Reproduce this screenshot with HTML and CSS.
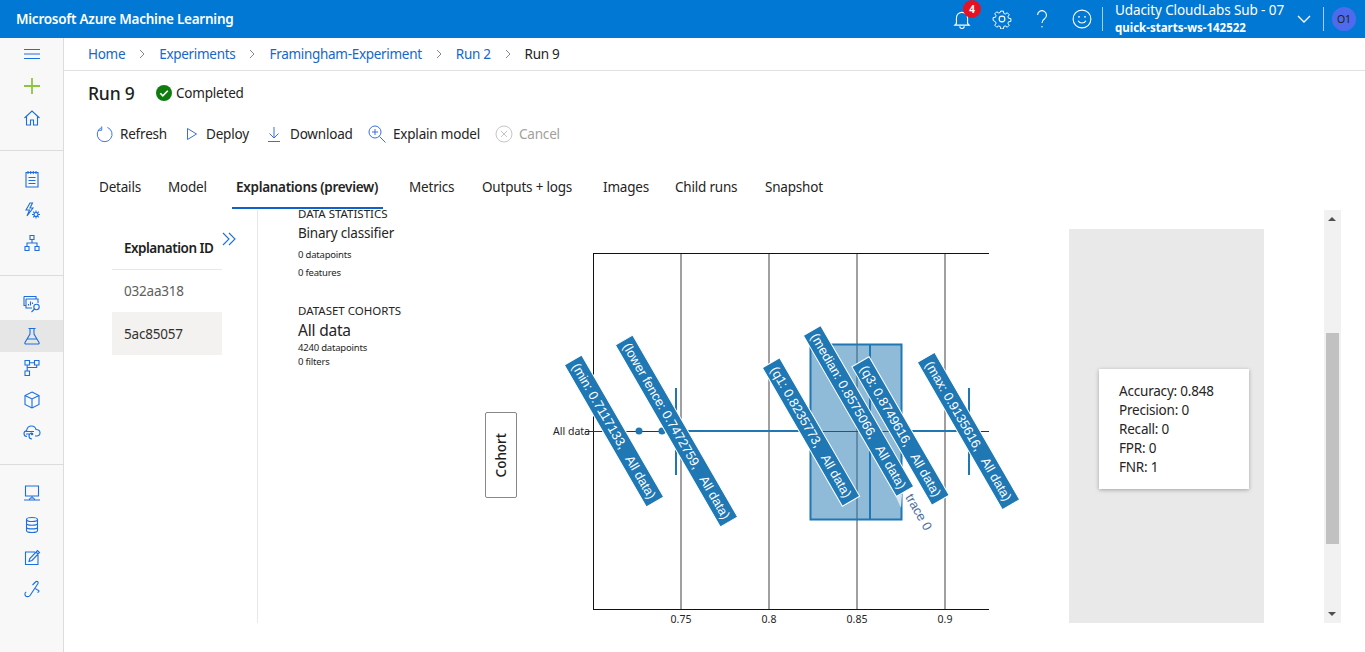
FILE: index.html
```html
<!DOCTYPE html>
<html lang="en">
<head>
  <meta charset="UTF-8">
  <meta name="viewport" content="width=device-width, initial-scale=1.0">
  <title>Run 9 - Microsoft Azure Machine Learning</title>
  <link rel="stylesheet" href="styles.css">
</head>
<body>
  <header class="topbar">
    <div class="brand">Microsoft Azure Machine Learning</div>
    <div class="top-actions">
      <div class="top-icon">
        <svg width="20" height="20" viewBox="0 0 18 18"><path d="M4 13V8a5 5 0 0 1 10 0v5l1.500 1.500h-13zM7 15.500a2 2 0 0 0 4 0"/></svg>
        <span class="badge">4</span>
      </div>
      <div class="top-icon">
        <svg width="20" height="20" viewBox="0 0 18 18"><circle cx="9" cy="9" r="2.600"/><path d="M7.600 1h2.800l.4 2.300 1.500.7 2-1.300 2 2-1.300 2 .6 1.500 2.400.4v2.800l-2.400.4-.6 1.500 1.300 2-2 2-2-1.300-1.500.6-.4 2.400H7.600l-.4-2.400-1.500-.6-2 1.300-2-2 1.300-2-.6-1.500L0 10.400V7.600l2.400-.4.6-1.500-1.300-2 2-2 2 1.300 1.500-.7z" transform="translate(1 1) scale(.89)"/></svg>
      </div>
      <div class="top-icon">
        <svg width="20" height="20" viewBox="0 0 18 18"><path d="M5 5.500a4 4 0 1 1 6.300 3.300c-1.500 1-2.300 1.700-2.300 3.700"/><circle class="dot" cx="9" cy="16" r=".7"/></svg>
      </div>
      <div class="top-icon">
        <svg width="20" height="20" viewBox="0 0 18 18"><circle cx="9" cy="9" r="8"/><path d="M5.500 10.500c1.500 2.800 5.500 2.800 7 0"/><circle class="dot" cx="6.300" cy="7" r=".8"/><circle class="dot" cx="11.700" cy="7" r=".8"/></svg>
      </div>
      <div class="account">
        <div class="account-name">Udacity CloudLabs Sub - 07</div>
        <div class="account-ws">quick-starts-ws-142522</div>
      </div>
      <svg class="account-chevron" width="14" height="8" viewBox="0 0 14 8"><path d="M1 1l6 6 6-6"/></svg>
      <div class="avatar-wrap"><span class="avatar">O1</span></div>
    </div>
  </header>

  <div class="shell">
    <nav class="sidebar">
      <div class="nav-group nav-first">
        <div class="nav-item"><svg viewBox="0 0 18 18"><path d="M1 4.500h16M1 9h16M1 13.500h16"/></svg></div>
        <div class="nav-item plus"><svg viewBox="0 0 18 18"><path d="M9 1v16M1 9h16"/></svg></div>
        <div class="nav-item"><svg viewBox="0 0 18 18"><path d="M1.500 9L9 2l7.500 7M3.500 7.500V16h4v-5h3v5h4V7.500"/></svg></div>
      </div>
      <div class="nav-group">
        <div class="nav-item"><svg viewBox="0 0 18 18"><path d="M3 2.500h12V17H3zM5 1v3M7.700 1v3M10.300 1v3M13 1v3M5.500 7.500h7M5.500 10.500h7M5.500 13.500h7"/></svg></div>
        <div class="nav-item"><svg viewBox="0 0 18 18"><path d="M7 1L3 8h3.500L4 14l6-8H7l2.500-5z"/><circle cx="13" cy="12.500" r="2"/><path d="M13 8.500v2M13 14.500v2M9 12.500h2M15 12.500h2M10.200 9.700l1.400 1.400M14.400 13.900l1.400 1.400M10.200 15.300l1.400-1.400M14.400 11.100l1.400-1.400"/></svg></div>
        <div class="nav-item"><svg viewBox="0 0 18 18"><path d="M7 1.500h4v4H7zM2 12.500h4v4H2zM12 12.500h4v4h-4zM9 5.500V9M4 12.500V9h10v3.500"/></svg></div>
      </div>
      <div class="nav-group">
        <div class="nav-item"><svg viewBox="0 0 18 18"><path d="M1 1.500h12v2M1 1.500v9h1.500M3 4h12v4M3 4v9h6M5.500 10.500V9M7.500 10.500V6.500M9.500 9V7.500"/><circle cx="13.500" cy="12" r="2.700"/><path d="M11.500 14L8.500 17"/></svg></div>
        <div class="nav-item active"><svg viewBox="0 0 18 18"><path d="M5.500 1.500h7M7 1.500v5.500L2 15.500c-.5 1 0 1.500 1 1.500h12c1 0 1.500-.5 1-1.500L11 7V1.500M4 12h10"/></svg></div>
        <div class="nav-item"><svg viewBox="0 0 18 18"><path d="M2 1.500h4.500V6H2zM11.500 1.500H16V6h-4.500zM2 12h4.500v4.500H2zM4.200 6v6M6.500 3.700h5M13.700 6v2.500H4.200"/></svg></div>
        <div class="nav-item"><svg viewBox="0 0 18 18"><path d="M9 1l7 3.500v9L9 17l-7-3.500v-9zM2 4.500L9 8l7-3.500M9 8v9"/></svg></div>
        <div class="nav-item"><svg viewBox="0 0 18 18"><path d="M4 13.500C1.500 13.500 1 11.500 1 10.500c0-1.500 1-2.500 2.500-2.700C4 5 6 3 8.500 3c2.300 0 4 1.500 4.500 3.500 2.500 0 4 1.500 4 3.300 0 2-1.500 3.200-3.500 3.200H12"/><path d="M2.500 8.500h8.500M3 11h3M9 16c-1.800 0-3-1.300-3-3s1.200-3 3-3"/><circle class="dot" cx="9" cy="11" r="1.300"/></svg></div>
      </div>
      <div class="nav-group nav-last">
        <div class="nav-item"><svg viewBox="0 0 18 18"><path d="M2.500 2h13v10h-13zM1 16h16M9 12v2M6 16l1.500-2h3L12 16"/></svg></div>
        <div class="nav-item"><svg viewBox="0 0 18 18"><ellipse cx="9" cy="3.500" rx="5.500" ry="2"/><path d="M3.500 3.500v11c0 1.100 2.500 2 5.500 2s5.500-.9 5.500-2v-11M3.500 7.200c0 1.100 2.500 2 5.500 2s5.500-.9 5.500-2M3.500 10.900c0 1.100 2.500 2 5.500 2s5.500-.9 5.500-2"/></svg></div>
        <div class="nav-item"><svg viewBox="0 0 18 18"><path d="M15 7v9.500H2.500V4H12M6 13.500l.8-3L14.500 2.500l2 2L9 12.500zM13 4l2 2"/></svg></div>
        <div class="nav-item"><svg viewBox="0 0 18 18"><path d="M13 1.500c1.500-.5 2.500.5 2 2L7 15.500c-1 1.500-3.500 1.500-4.500.3-1-1.200-.8-3 .7-3.800M9.500 5L13 1.500M11.500 8l3 2c2 0 2 2 0 2.500"/></svg></div>
      </div>
    </nav>

    <main class="main">
      <div class="breadcrumb">
        <a class="crumb">Home</a><svg class="crumb-sep" viewBox="0 0 6 10"><path d="M1 1l4 4-4 4"/></svg>
        <a class="crumb">Experiments</a><svg class="crumb-sep" viewBox="0 0 6 10"><path d="M1 1l4 4-4 4"/></svg>
        <a class="crumb">Framingham-Experiment</a><svg class="crumb-sep" viewBox="0 0 6 10"><path d="M1 1l4 4-4 4"/></svg>
        <a class="crumb">Run 2</a><svg class="crumb-sep" viewBox="0 0 6 10"><path d="M1 1l4 4-4 4"/></svg>
        <span class="crumb-current">Run 9</span>
      </div>

      <div class="title-row">
        <h1 class="run-title">Run 9</h1>
        <svg class="status-icon" width="16" height="16" viewBox="0 0 16 16"><circle cx="8" cy="8" r="8"/><path d="M4.300 8.300l2.500 2.500 5-5"/></svg>
        <span class="status-text">Completed</span>
      </div>

      <div class="commands">
        <div class="cmd cmd-refresh"><svg width="18" height="18" viewBox="0 0 18 18"><path d="M11.500 2A7.800 7.800 0 1 1 5 2.300M5.500 1v4H1.500" transform="translate(.5 .5) scale(.95)"/></svg>Refresh</div>
        <div class="cmd cmd-deploy"><svg width="12" height="14" viewBox="0 0 12 14"><path d="M1.500 1.500v11l9-5.500z"/></svg>Deploy</div>
        <div class="cmd cmd-download"><svg width="14" height="16" viewBox="0 0 14 16"><path d="M7 1v10.500M2.500 7.500L7 12l4.500-4.500M1 15.500h12"/></svg>Download</div>
        <div class="cmd cmd-explain"><svg width="18" height="18" viewBox="0 0 18 18"><circle cx="7" cy="7" r="6"/><path d="M11.500 11.500l6 6M7 4v6M4 7h6"/></svg>Explain model</div>
        <div class="cmd cmd-cancel"><svg width="18" height="18" viewBox="0 0 18 18"><circle cx="9" cy="9" r="8"/><path d="M6 6l6 6M12 6l-6 6"/></svg>Cancel</div>
      </div>

      <div class="tabs">
        <div class="tab tab-details">Details</div>
        <div class="tab tab-model">Model</div>
        <div class="tab tab-expl">Explanations (preview)</div>
        <div class="tab tab-metrics">Metrics</div>
        <div class="tab tab-outputs">Outputs + logs</div>
        <div class="tab tab-images">Images</div>
        <div class="tab tab-child">Child runs</div>
        <div class="tab">Snapshot</div>
      </div>

      <div class="content">
        <section class="expl-list">
          <div class="expl-table">
            <div class="expl-head">Explanation ID</div>
            <div class="expl-row">032aa318</div>
            <div class="expl-row selected">5ac85057</div>
          </div>
          <svg class="expand" width="14" height="14" viewBox="0 0 14 14"><path d="M1 1l6 6-6 6M7 1l6 6-6 6"/></svg>
        </section>

        <section class="stats">
          <div class="stats-head">DATA STATISTICS</div>
          <div class="stats-type">Binary classifier</div>
          <div class="stats-small stats-points">0 datapoints</div>
          <div class="stats-small stats-features">0 features</div>
          <div class="stats-head cohorts-head">DATASET COHORTS</div>
          <div class="stats-name">All data</div>
          <div class="stats-small cohort-points">4240 datapoints</div>
          <div class="stats-small cohort-filters">0 filters</div>
        </section>

        <button class="cohort-btn"><span>Cohort</span></button>

        <svg class="chart" width="552" height="425" viewBox="517 210 552 425">
          <g class="grid">
            <path d="M681 253V609M769 253V609M857 253V609M945 253V609"/>
          </g>
          <path class="frame" d="M989 253H593V609H989"/>
          <path class="zero" d="M585 431H989"/>
          <g class="box">
            <rect x="810.500" y="344.500" width="91" height="175"/>
            <path d="M870 344V519M676 431H810M902 431H969M676 388V475M969 388V475"/>
            <circle cx="639" cy="431" r="3.500"/>
            <circle cx="662" cy="431" r="3.500"/>
          </g>
          <text class="tick" x="590" y="435" text-anchor="end">All data</text>
          <text class="tick" x="681" y="623" text-anchor="middle">0.75</text>
          <text class="tick" x="769" y="623" text-anchor="middle">0.8</text>
          <text class="tick" x="857" y="623" text-anchor="middle">0.85</text>
          <text class="tick" x="945" y="623" text-anchor="middle">0.9</text>

          <g class="hover" transform="translate(614 431) rotate(60)">
            <rect x="-82" y="-10" width="164" height="20"/>
            <text text-anchor="middle" y="4.500">(min: 0.7117133,   All data)</text>
          </g>
          <g class="hover" transform="translate(676.500 431) rotate(60)">
            <rect x="-105" y="-10" width="210" height="20"/>
            <text text-anchor="middle" y="4.500">(lower fence: 0.7472759,   All data)</text>
          </g>
          <g class="hover" transform="translate(811 432) rotate(60)">
            <rect x="-80" y="-10" width="160" height="20"/>
            <text text-anchor="middle" y="4.500">(q1: 0.8235773,   All data)</text>
          </g>
          <polygon class="hover-tip" points="896,497 902,494 901,508"/>
          <text class="trace" transform="translate(905 497) rotate(60)">trace 0</text>
          <g class="hover" transform="translate(858.500 411) rotate(60)">
            <rect x="-93" y="-10" width="186" height="20"/>
            <text text-anchor="middle" y="4.500">(median: 0.8575066,   All data)</text>
          </g>
          <g class="hover" transform="translate(900.500 431) rotate(60)">
            <rect x="-80" y="-10" width="160" height="20"/>
            <text text-anchor="middle" y="4.500">(q3: 0.8749616,   All data)</text>
          </g>
          <g class="hover" transform="translate(968.500 431) rotate(60)">
            <rect x="-85" y="-10" width="170" height="20"/>
            <text text-anchor="middle" y="4.500">(max: 0.9135616,   All data)</text>
          </g>
        </svg>

        <aside class="metrics-panel">
          <div class="metrics-card">
            <div>Accuracy: 0.848</div>
            <div>Precision: 0</div>
            <div>Recall: 0</div>
            <div>FPR: 0</div>
            <div>FNR: 1</div>
          </div>
        </aside>

        <div class="scrollbar">
          <span class="arrow-up"></span>
          <div class="thumb"></div>
          <span class="arrow-down"></span>
        </div>
      </div>
    </main>
  </div>
</body>
</html>
```

FILE: styles.css
```css
html, body {
  margin: 0;
  height: 100%;
  overflow: hidden;
}
body {
  font-family: "Noto Sans", "Open Sans", sans-serif;
  font-size: 13.5px;
  letter-spacing: -0.2px;
  color: #252423;
  background-color: #fff;
}
svg {
  fill: none;
  stroke: currentColor;
  flex: none;
}
.dot {
  fill: currentColor;
  stroke: none;
}

/* top bar */
.topbar {
  height: 38px;
  display: flex;
  align-items: center;
  justify-content: space-between;
  background-color: #0078d4;
  color: #fff;
}
.brand {
  margin-left: 16px;
  font-weight: 600;
  font-size: 13.5px;
  letter-spacing: -0.25px;
}
.top-actions {
  display: flex;
  align-items: center;
  height: 100%;
}
.top-icon {
  width: 40px;
  height: 38px;
  display: flex;
  align-items: center;
  justify-content: center;
  position: relative;
}
.badge {
  position: absolute;
  top: 0;
  left: 21px;
  width: 18px;
  height: 18px;
  border-radius: 50%;
  background-color: #e81123;
  font-size: 10px;
  font-weight: 700;
  line-height: 18px;
  text-align: center;
}
.account {
  height: 24px;
  width: 178px;
  padding-left: 12px;
  border-left: 1px solid #a9cdec;
  display: flex;
  flex-direction: column;
  justify-content: center;
}
.account-name {
  font-size: 13.5px;
  letter-spacing: -0.1px;
  line-height: 19px;
  margin-top: -3px;
}
.account-ws {
  font-size: 11.500px;
  font-weight: 700;
  letter-spacing: 0;
  line-height: 15px;
}
.account-chevron {
  margin-left: 4px;
  stroke-width: 1.3;
}
.avatar-wrap {
  width: 40px;
  height: 24px;
  margin-left: 12px;
  margin-right: 1px;
  border-left: 1px solid #a9cdec;
  display: flex;
  align-items: center;
  justify-content: center;
}
.avatar {
  width: 24px;
  height: 24px;
  border-radius: 50%;
  background-color: #4f6bed;
  color: #201f1e;
  font-size: 10.500px;
  line-height: 24px;
  text-align: center;
}

/* shell */
.shell {
  display: flex;
  height: 614px;
}
.sidebar {
  width: 63px;
  flex: none;
  background-color: #f8f8f8;
  border-right: 1px solid #dcdcdc;
}
.nav-group {
  padding: 12px 0 16px;
  border-bottom: 1px solid #dcdcdc;
}
.nav-first {
  padding-top: 0;
}
.nav-last {
  border-bottom: none;
}
.nav-item {
  height: 32px;
  display: flex;
  align-items: center;
  justify-content: center;
  color: #1a6fdc;
}
.nav-item svg {
  width: 18px;
  height: 18px;
  stroke-width: 1.1;
}
.nav-item.plus {
  color: #8cc63f;
}
.nav-item.plus svg {
  stroke-width: 1.800;
}
.nav-item.active {
  background-color: #e6e6e6;
}

.main {
  flex: 1;
  min-width: 0;
}
.breadcrumb {
  height: 32px;
  padding-left: 24px;
  border-bottom: 1px solid #e1e1e1;
  display: flex;
  align-items: center;
  letter-spacing: -0.3px;
}
.crumb {
  color: #1567c8;
}
.crumb-sep {
  width: 6px;
  height: 10px;
  margin: 0 14px;
  color: #8a8886;
}
.crumb-current {
  color: #252423;
}

.title-row {
  height: 44px;
  padding-left: 24px;
  display: flex;
  align-items: center;
}
.run-title {
  margin: 0;
  width: 68px;
  font-size: 17.500px;
  font-weight: 500;
  color: #201f1e;
}
.status-icon {
  fill: #107c10;
  stroke: none;
}
.status-icon path {
  fill: none;
  stroke: #fff;
  stroke-width: 1.600;
}
.status-text {
  margin-left: 4px;
}

.commands {
  height: 38px;
  display: flex;
  align-items: center;
  margin-top: 0;
  padding-left: 32px;
}
.cmd {
  display: flex;
  align-items: center;
}
.cmd svg {
  color: #3a6fe0;
}
.cmd-refresh {
  width: 90px;
  gap: 6px;
}
.cmd-deploy {
  width: 81px;
  gap: 8px;
}
.cmd-download {
  width: 101px;
  gap: 9px;
}
.cmd-explain {
  width: 127px;
  gap: 7px;
}
.cmd-cancel {
  gap: 6px;
  color: #a19f9d;
}
.cmd-cancel svg {
  color: #c8c6c4;
}

.tabs {
  height: 41px;
  margin-top: 16px;
  padding-left: 35px;
  display: flex;
}
.tab {
  height: 41px;
  line-height: 37px;
  box-sizing: border-box;
  white-space: nowrap;
}
.tab-details { width: 69px; }
.tab-model { width: 68px; }
.tab-expl {
  width: 173px;
  font-weight: 600;
  letter-spacing: -0.3px;
  position: relative;
}
.tab-expl::after {
  content: "";
  position: absolute;
  left: -4px;
  width: 151px;
  bottom: 1px;
  height: 2px;
  background-color: #0f62c9;
}
.tab-metrics { width: 73px; }
.tab-outputs { width: 121px; }
.tab-images { width: 72px; }
.tab-child { width: 90px; }

.content {
  display: flex;
  height: 413px;
}
.expl-list {
  width: 145px;
  flex: none;
  padding-left: 48px;
  border-right: 1px solid #e8e8e8;
  display: flex;
  align-items: flex-start;
}
.expl-table {
  width: 110px;
  margin-top: 17px;
}
.expl-head {
  height: 42px;
  line-height: 42px;
  padding-left: 12px;
  font-weight: 600;
  letter-spacing: -0.5px;
  border-bottom: 1px solid #e8e8e8;
  color: #201f1e;
}
.expl-row {
  height: 42px;
  line-height: 43px;
  padding-left: 12px;
  color: #605e5c;
}
.expl-row.selected {
  height: 43px;
  line-height: 44px;
  background-color: #f3f2f1;
  color: #323130;
}
.expand {
  margin-top: 22px;
  color: #1a6fdc;
  stroke-width: 1.100;
}

.stats {
  width: 187px;
  padding-left: 40px;
  flex: none;
  position: relative;
  color: #252423;
}
.stats-head {
  font-size: 11.500px;
  letter-spacing: 0;
  line-height: 14px;
  margin-top: -3px;
}
.stats-type {
  font-size: 13.500px;
  line-height: 18px;
  margin-top: 3px;
}
.stats-small {
  font-size: 9.500px;
  line-height: 13px;
}
.stats-points {
  margin-top: 6px;
}
.stats-features {
  margin-top: 5px;
}
.cohorts-head {
  margin-top: 25px;
}
.stats-name {
  font-size: 15.500px;
  line-height: 20px;
  margin-top: 2px;
}
.cohort-points {
  margin-top: 1px;
}
.cohort-filters {
  margin-top: 1px;
}

.cohort-btn {
  width: 32px;
  height: 86px;
  margin-top: 202px;
  padding: 0;
  flex: none;
  background-color: #fff;
  border: 1px solid #8a8886;
  border-radius: 2px;
  font: inherit;
  font-weight: 500;
  font-size: 13.500px;
  color: #201f1e;
  display: flex;
  align-items: center;
  justify-content: center;
}
.cohort-btn span {
  writing-mode: vertical-rl;
  transform: rotate(180deg);
}

/* plot */
.chart {
  display: block;
}
.grid path {
  stroke: #a0a0a0;
  stroke-width: 2;
}
.frame {
  stroke: #111;
  stroke-width: 1;
  shape-rendering: crispEdges;
}
.zero {
  stroke: #333;
  stroke-width: 1;
  shape-rendering: crispEdges;
}
.box rect {
  fill: rgba(31, 119, 180, 0.5);
  stroke: #1f77b4;
  stroke-width: 2;
}
.box path {
  stroke: #1f77b4;
  stroke-width: 2;
}
.box circle {
  fill: #1f77b4;
  stroke: none;
}
.tick {
  font-size: 10.500px;
  letter-spacing: 0;
  fill: #252423;
  stroke: none;
}
.hover rect {
  fill: #1f77b4;
  stroke: #fff;
  stroke-width: 1;
}
.hover text {
  font-family: "Liberation Sans", Arial, sans-serif;
  font-size: 13px;
  letter-spacing: 0;
  white-space: pre;
  fill: #fff;
  stroke: none;
}
.hover-tip {
  fill: #d8e6f1;
  stroke: none;
}
.trace {
  font-family: "Liberation Sans", Arial, sans-serif;
  font-size: 13px;
  letter-spacing: 0;
  fill: #4a6d9c;
  stroke: none;
}

/* right panel */
.metrics-panel {
  width: 165px;
  height: 394px;
  margin-top: 19px;
  padding-left: 30px;
  flex: none;
  background-color: #e9e9e9;
  display: flex;
  align-items: center;
}
.metrics-card {
  width: 130px;
  height: 107px;
  margin-top: 6px;
  padding: 13px 0 0 20px;
  background-color: #fff;
  box-shadow: 0 1px 4px rgba(0, 0, 0, 0.3);
  font-size: 13.500px;
  line-height: 19px;
  overflow: hidden;
}

.scrollbar {
  width: 17px;
  height: 413px;
  margin-left: 60px;
  flex: none;
  background-color: #f1f1f1;
  position: relative;
}
.thumb {
  position: absolute;
  left: 2px;
  top: 123px;
  width: 13px;
  height: 211px;
  background-color: #c1c1c1;
}
.arrow-up, .arrow-down {
  position: absolute;
  left: 4px;
  border-left: 4px solid transparent;
  border-right: 4px solid transparent;
}
.arrow-up {
  top: 7px;
  border-bottom: 4px solid #505050;
}
.arrow-down {
  bottom: 7px;
  border-top: 4px solid #505050;
}
```
